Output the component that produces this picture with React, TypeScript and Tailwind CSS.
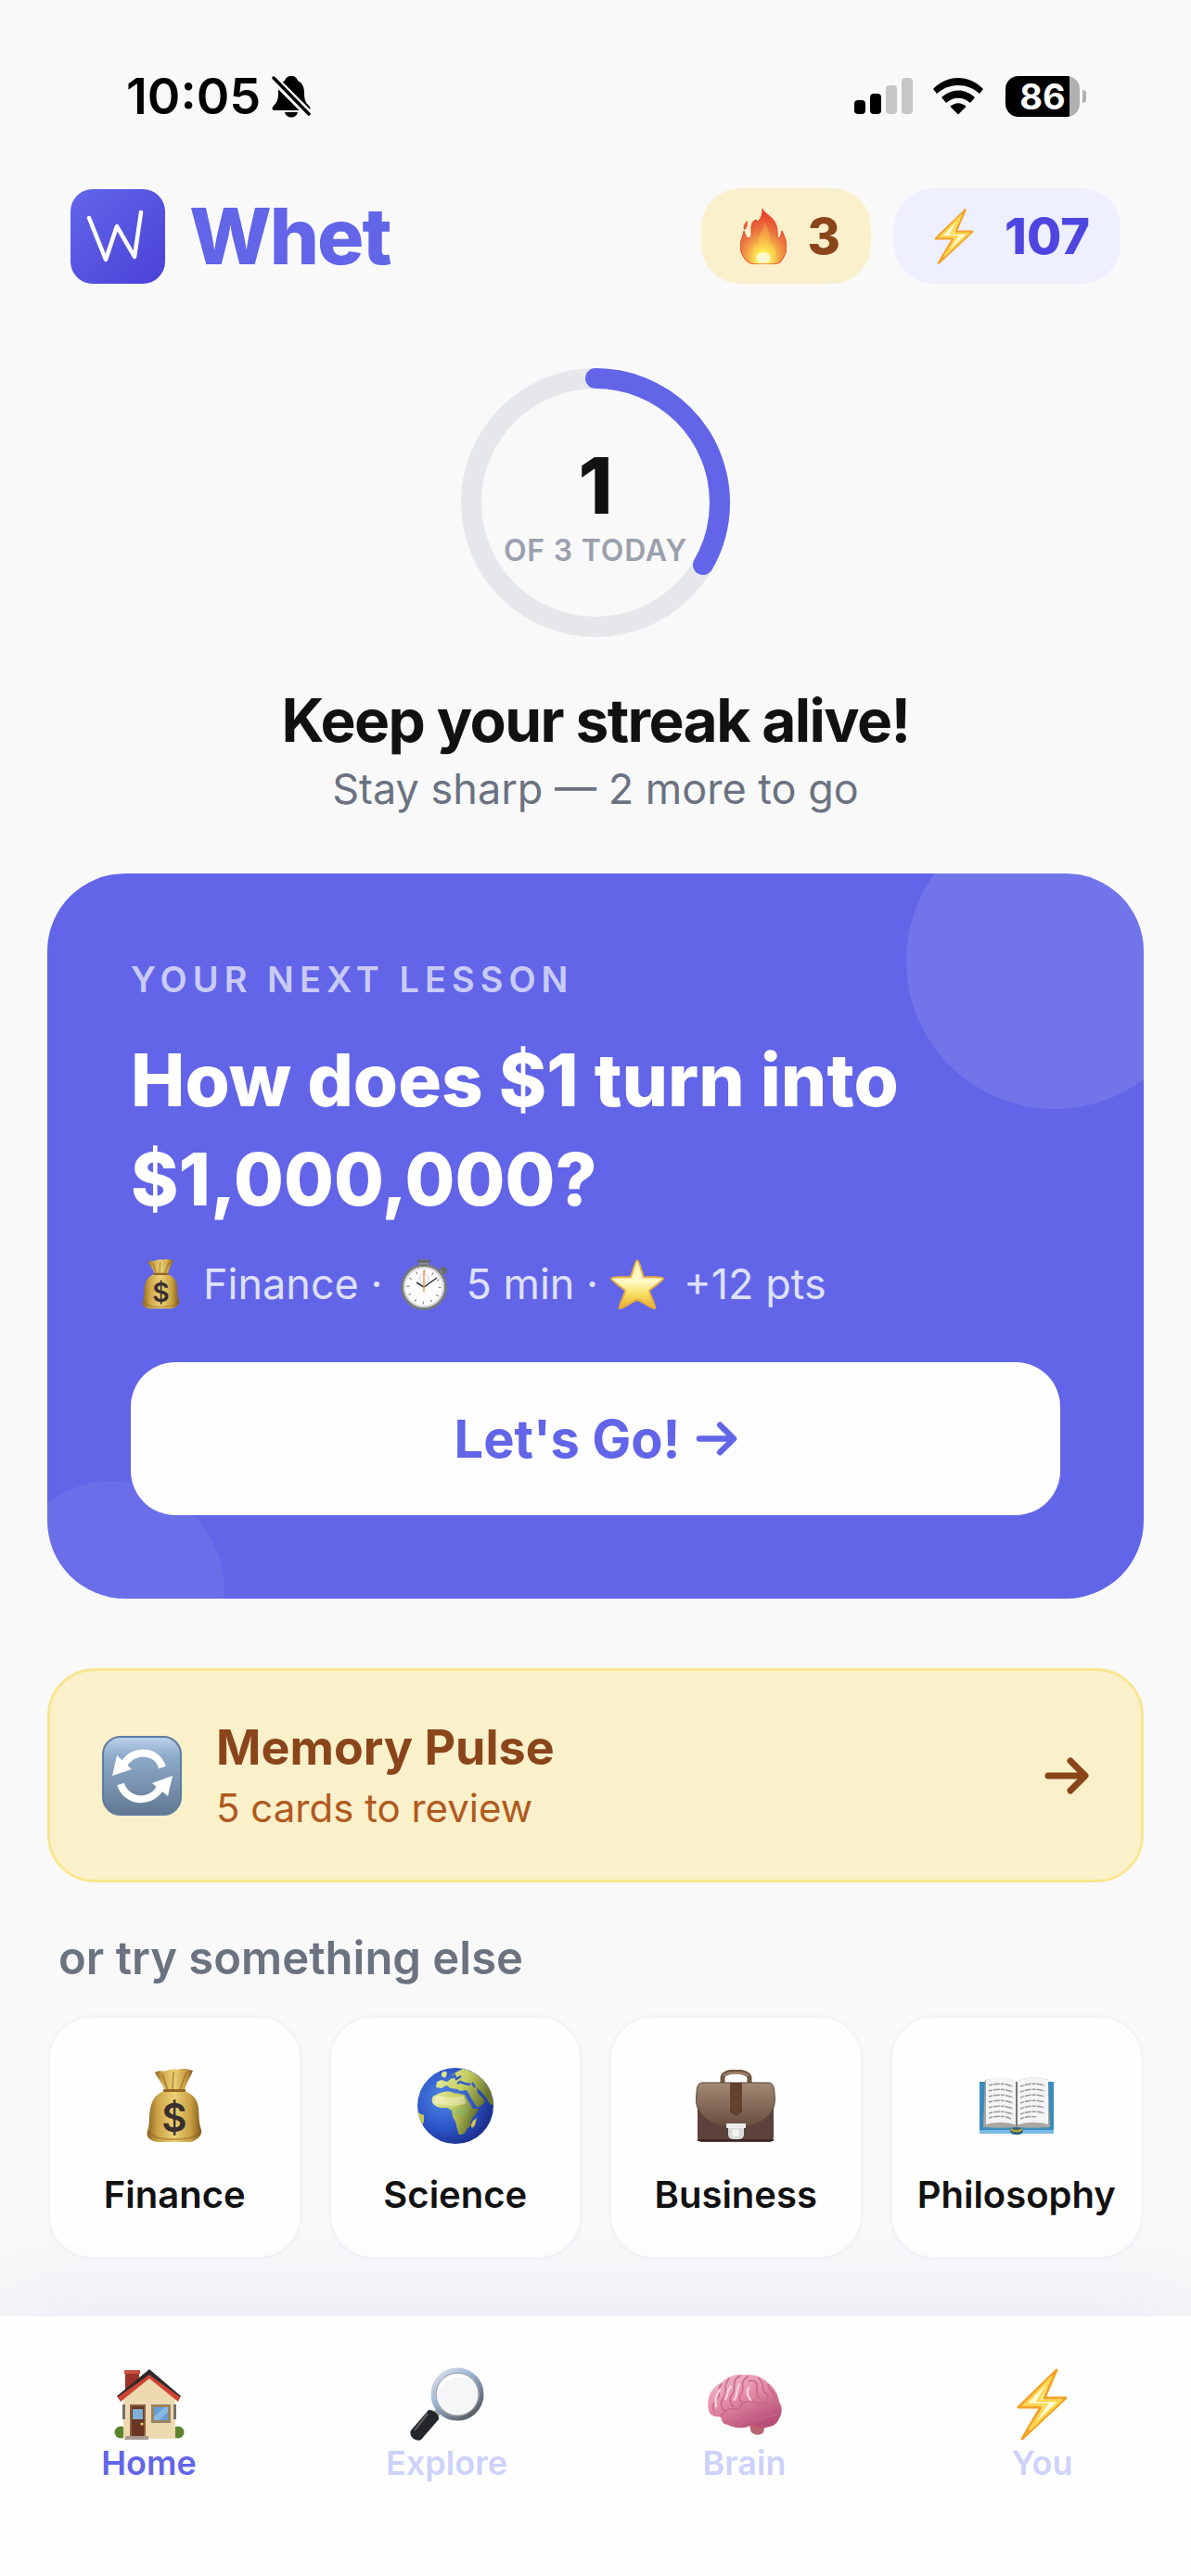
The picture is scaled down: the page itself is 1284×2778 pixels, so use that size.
import clsx from "clsx";
import type { ReactNode } from "react";

type IconProps = { className?: string };

const topics = [
  { label: "Finance", icon: <MoneyBag className="h-20 w-[60px]" /> },
  { label: "Science", icon: <Globe className="size-[84px]" /> },
  { label: "Business", icon: <Briefcase className="h-[78px] w-[86px]" /> },
  { label: "Philosophy", icon: <Book className="h-[62px] w-20" /> },
];

const tabs = [
  { label: "Home", icon: <House className="size-[76px]" />, active: true },
  { label: "Explore", icon: <Magnifier className="size-20" /> },
  { label: "Brain", icon: <Brain className="h-[66px] w-20" /> },
  { label: "You", icon: <Bolt className="h-20 w-14" /> },
];

export default function App() {
  return (
    <div className="flex min-h-screen flex-col bg-[#f9f9fa] font-['Inter','Liberation_Sans',sans-serif] text-[#111111]">
      <StatusBar />
      <Header />
      <main className="flex flex-1 flex-col px-[51px] pb-[61px]">
        <DailyProgress done={1} goal={3} />
        <NextLesson />
        <MemoryPulse />
        <h2 className="mt-[50px] px-3 text-[49px] leading-16 font-semibold text-[#6b7280]">
          or try something else
        </h2>
        <div className="mt-[29px] grid grid-cols-4 gap-7">
          {topics.map((topic) => (
            <button
              key={topic.label}
              type="button"
              className="flex flex-col items-center gap-[30px] rounded-[48px] border-3 border-[#f3f4f6] bg-[#fefefe] pt-[53px] pb-[43px]"
            >
              <span className="flex h-[84px] items-center">{topic.icon}</span>
              <span className="text-[40px] leading-12 font-semibold">{topic.label}</span>
            </button>
          ))}
        </div>
      </main>
      <TabBar />
    </div>
  );
}

function StatusBar() {
  return (
    <div className="flex h-32 items-end justify-between pr-[113px] pl-[136px] text-black">
      <div className="flex h-12 items-center gap-3">
        <span className="text-[54px] leading-12 font-semibold">10:05</span>
        <svg viewBox="0 0 42 46" className="h-[46px] w-[42px]" aria-label="Silent mode">
          <path
            d="M21 1c-4 0-6 2-7 5C8 9 7 14 7 20c0 7-2 10-5 13-3 4-1 5 2 5h34c3 0 5-2 2-5-3-3-5-6-5-13 0-6-1-11-7-14-1-3-3-5-7-5Z"
          />
          <path d="M14 40h14c-1 4-4 5.500-7 5.500S15 44 14 40Z" />
          <path d="M1 3 41 43" stroke="#f9f9fa" strokeWidth="9" />
          <path d="M2 3 40 42" stroke="currentColor" strokeWidth="3.500" strokeLinecap="round" />
        </svg>
      </div>
      <div className="flex h-12 items-center">
        <svg viewBox="0 0 63 40" className="h-10 w-[63px]" aria-label="Signal">
          <rect x="0" y="24" width="12" height="15" rx="4" />
          <rect x="17" y="17" width="12" height="22" rx="4" />
          <rect x="34" y="8" width="12" height="31" rx="4" fill="#c6c6c6" />
          <rect x="51" y="0" width="12" height="39" rx="4" fill="#c6c6c6" />
        </svg>
        <svg viewBox="0 0 54 40" className="ml-[22px] h-10 w-[54px]" aria-label="Wi-Fi">
          <path d="M0 12C15-4 39-4 54 12l-4 5C37 5 17 5 4 17Z" />
          <path d="M9 21c11-10 25-10 36 0l-5 6c-8-7-18-7-26 0Z" />
          <path d="M18.500 31c5-5 12-5 17 0L27 39.500Z" />
        </svg>
        <div className="ml-6 flex items-center gap-[3px]">
          <div className="flex h-11 w-20 items-center justify-center rounded-[14px] bg-linear-to-r from-black from-86% to-[#b0b0b0] to-86%">
            <span className="text-[38px] leading-11 font-bold text-white">86</span>
          </div>
          <div className="h-3.5 w-1 rounded-r-full bg-[#b0b0b0]" />
        </div>
      </div>
    </div>
  );
}

function Header() {
  return (
    <header className="mt-[75px] flex h-[103px] items-center justify-between px-[76px]">
      <div className="flex items-center gap-[26px]">
        <div className="flex size-[102px] items-center justify-center rounded-[24px] bg-linear-to-br from-[#6366ea] to-[#4b40d8]">
          <svg viewBox="0 0 102 102" className="size-full" fill="none" aria-hidden="true">
            <path
              d="M20 31 38 76 50 40 69 73 76 25"
              stroke="white"
              strokeWidth="4.500"
              strokeLinecap="round"
              strokeLinejoin="round"
            />
          </svg>
        </div>
        <h1 className="text-[84px] leading-none font-extrabold tracking-tight text-[#6265e8]">Whet</h1>
      </div>
      <div className="flex gap-[25px]">
        <Stat className="w-[183px] bg-[#faf0cb] text-[#8a451b]" value={3}>
          <Fire className="h-[60px] w-[50px]" />
        </Stat>
        <Stat className="w-[244px] bg-[#eeefff] text-[#4f46e0]" value={107}>
          <Bolt className="h-[62px] w-[46px]" />
        </Stat>
      </div>
    </header>
  );
}

function Stat({ className, value, children }: { className: string; value: number; children: ReactNode }) {
  return (
    <div className={clsx("flex h-[103px] items-center justify-between rounded-[42px] pr-[33px] pl-[42px]", className)}>
      {children}
      <span className="text-[54px] leading-none font-extrabold">{value}</span>
    </div>
  );
}

function DailyProgress({ done, goal }: { done: number; goal: number }) {
  const circumference = 2 * Math.PI * 134;
  return (
    <section className="mt-[91px] flex flex-col items-center text-center">
      <div className="grid size-[290px] place-items-center *:col-start-1 *:row-start-1">
        <svg viewBox="0 0 290 290" className="size-full -rotate-90" fill="none" strokeWidth="22" aria-hidden="true">
          <circle cx="145" cy="145" r="134" stroke="#e5e7ea" />
          <circle
            cx="145"
            cy="145"
            r="134"
            stroke="#6265e8"
            strokeLinecap="round"
            strokeDasharray={`${(circumference * done) / goal} ${circumference}`}
          />
        </svg>
        <div className="flex flex-col items-center pt-2">
          <span className="text-[84px] leading-24 font-extrabold">{done}</span>
          <span className="text-[32px] leading-11 font-semibold tracking-wide text-[#9ca0ad]">OF {goal} TODAY</span>
        </div>
      </div>
      <h2 className="mt-[50px] text-[64px] leading-20 font-bold tracking-tight">Keep your streak alive!</h2>
      <p className="text-[45px] leading-[68px] text-[#6b7280]">Stay sharp — {goal - done} more to go</p>
    </section>
  );
}

function NextLesson() {
  return (
    <section className="relative mt-[57px] overflow-hidden rounded-[84px] bg-[#6265e8] p-[90px] text-white">
      <div className="absolute -top-[66px] -right-16 size-80 rounded-full bg-white/10" />
      <div className="absolute -bottom-[113px] -left-[49px] size-60 rounded-full bg-white/6" />
      <div className="relative flex flex-col">
        <p className="text-[38px] leading-12 font-semibold tracking-[6px] text-[#c9cbf5]">YOUR NEXT LESSON</p>
        <h2 className="mt-[31px] max-w-[900px] text-[78px] leading-[107px] font-extrabold">
          How does $1 turn into $1,000,000?
        </h2>
        <p className="mt-[30px] flex h-[60px] items-center text-[45px] text-[#dfe0fa]">
          <MoneyBag className="mr-[25px] ml-3 h-[54px] w-[41px]" />
          Finance ·
          <Stopwatch className="mx-5 h-14 w-[50px]" />
          5 min ·
          <Star className="mr-5 ml-3 h-14 w-[60px]" />
          +12 pts
        </p>
        <button
          type="button"
          className="mt-[54px] flex h-[165px] items-center justify-center gap-4 rounded-[48px] bg-[#fefefe] text-[56px] font-bold text-[#6265e8]"
        >
          Let&apos;s Go!
          <Arrow className="h-[37px] w-[45px]" />
        </button>
      </div>
    </section>
  );
}

function MemoryPulse() {
  return (
    <button
      type="button"
      className="mt-[75px] flex h-[231px] items-center rounded-[51px] border-3 border-[#f9e690] bg-[#faf0ca] px-14 text-left text-[#8a451b]"
    >
      <Refresh className="size-[86px]" />
      <span className="ml-[37px] flex flex-1 flex-col">
        <span className="text-[52px] leading-[70px] font-bold">Memory Pulse</span>
        <span className="text-[42px] leading-[60px] text-[#b05a20]">5 cards to review</span>
      </span>
      <Arrow className="h-10 w-12" />
    </button>
  );
}

function TabBar() {
  return (
    <nav className="grid h-[280px] grid-cols-4 bg-[#fefefe] pt-[55px] shadow-[0_-12px_90px_rgba(90,90,190,0.10)]">
      {tabs.map((tab) => (
        <a
          key={tab.label}
          href={`#${tab.label.toLowerCase()}`}
          className={clsx("flex flex-col items-center", tab.active ? "text-[#6265e8]" : "text-[#ccd2fa]")}
        >
          <span className="flex h-20 items-center">{tab.icon}</span>
          <span className="text-[36px] leading-[46px] font-semibold">{tab.label}</span>
        </a>
      ))}
    </nav>
  );
}

/* Icons */

function Arrow({ className }: IconProps) {
  return (
    <svg viewBox="0 0 48 40" className={className} fill="none" stroke="currentColor" aria-hidden="true">
      <path d="M4 20h39M28 4l16 16-16 16" strokeWidth="7" strokeLinecap="round" strokeLinejoin="round" />
    </svg>
  );
}

function Fire({ className }: IconProps) {
  return (
    <svg viewBox="0 0 50 60" className={className} aria-hidden="true">
      <defs>
        <radialGradient id="fire" cx="0.500" cy="0.900" r="0.800">
          <stop offset="0" stopColor="#fffbd0" />
          <stop offset="0.180" stopColor="#fdee5a" />
          <stop offset="0.400" stopColor="#f5ad48" />
          <stop offset="0.650" stopColor="#ec7440" />
          <stop offset="1" stopColor="#e5422a" />
        </radialGradient>
      </defs>
      <path
        d="M24 0c1 6 17 9 16 27 0 3 0 5 1 5 3-1 3-4 4-8 4 8 5 13 5 19-1 7-4 11-7 15-4 2-9 2-14 2H18C12 60 7 58 5 54 1 49 0 44 0 38c1-5 3-8 4-14 1 3 2 6 4 8 5 0 4-4 4-9 0-6 1-10 5-11 2 2 1 2 3 1 3-3 4-8 4-13Z"
        fill="url(#fire)"
        stroke="#e5452b"
        strokeWidth="1"
      />
      <path d="M8 13c-4 3-5 6-4 10 4-2 4-5 4-10Z" fill="#ea5a3a" />
      <path d="M26 14c1 8-6 12-6 20 0 6-4 8-7 5 2 6-1 11 2 15 4 5 17 5 21 0 3-4 0-9 3-14-4 2-7-1-7-7 0-8-3-12-6-19Z" fill="#ffd84a" opacity="0.350" />
      <ellipse cx="25" cy="53" rx="8" ry="6" fill="#fffde0" opacity="0.800" />
    </svg>
  );
}

function Bolt({ className }: IconProps) {
  return (
    <svg viewBox="0 0 56 80" className={className} aria-hidden="true">
      <path
        d="M43 3 2 43h24L6 77l47-44H30Z"
        fill="#fff4a0"
        stroke="#f3a229"
        strokeWidth="3"
        strokeLinejoin="round"
      />
      <path d="M38 10 9 40h23L14 67l33-31H23Z" fill="#fffbd5" stroke="#fbd64c" strokeWidth="2.500" />
    </svg>
  );
}

function MoneyBag({ className }: IconProps) {
  return (
    <svg viewBox="0 0 60 80" className={className} aria-hidden="true">
      <defs>
        <linearGradient id="bag">
          <stop offset="0" stopColor="#8c6523" />
          <stop offset="0.200" stopColor="#cda548" />
          <stop offset="0.500" stopColor="#ecd276" />
          <stop offset="0.800" stopColor="#c99f41" />
          <stop offset="1" stopColor="#82591d" />
        </linearGradient>
      </defs>
      <path d="M9 4c5-4 9 0 13-2 5-2 8-2 11-1 6-2 10-1 17 1-3 8-8 14-9 22H20C18 16 12 11 9 4Z" fill="url(#bag)" />
      <path d="m17 6 6 17M29 3l-1 19M43 4l-7 18" stroke="#8f672b" strokeWidth="1.500" opacity="0.700" />
      <path d="M19 24h22c8 3 14 8 15 19 1 10 0 14 3 23 1 5-3 11-12 13H13C3 78-1 73 1 67c3-9 1-15 3-24 2-11 7-16 15-19Z" fill="url(#bag)" />
      <path d="M2 68c8 8 16 8 28 8s22-1 28-8" fill="none" stroke="#8b6222" strokeWidth="2" opacity="0.500" />
      <rect x="18" y="22" width="24" height="3" rx="1" fill="#936425" />
      <text x="30" y="68" fill="#3a2f2f" fontSize="42" fontWeight="600" textAnchor="middle">
        $
      </text>
    </svg>
  );
}

function Stopwatch({ className }: IconProps) {
  return (
    <svg viewBox="0 0 50 56" className={className} aria-hidden="true">
      <path d="M20 1h10v7H20Z" fill="#8b8f92" />
      <path d="M18 3h14" stroke="#5f6669" strokeWidth="3" />
      <circle cx="46" cy="13" r="4" fill="#646a6d" />
      <path d="m40 17 5-4" stroke="#777c80" strokeWidth="4" />
      <circle cx="25" cy="31" r="23.500" fill="#fdfdfd" stroke="#777b7f" strokeWidth="3" />
      <circle cx="25" cy="31" r="21" fill="none" stroke="#d5d5d5" strokeWidth="2" />
      <circle cx="25" cy="31" r="17" fill="none" stroke="#777" strokeWidth="3" strokeDasharray="1 7.900" />
      <circle cx="25" cy="22" r="5" fill="none" stroke="#d0cccc" />
      <path d="m17 26 8 5 14-10" fill="none" stroke="#333" strokeWidth="1.500" />
      <path d="M25 13v23" stroke="#e89758" strokeWidth="1.500" />
    </svg>
  );
}

function Star({ className }: IconProps) {
  return (
    <svg viewBox="0 0 60 56" className={className} aria-hidden="true">
      <defs>
        <linearGradient id="star" x2="0" y2="1">
          <stop offset="0" stopColor="#fff3b0" />
          <stop offset="0.450" stopColor="#fff8c5" />
          <stop offset="0.700" stopColor="#f8df62" />
          <stop offset="1" stopColor="#e6a72f" />
        </linearGradient>
      </defs>
      <path
        d="M30 2c2 0 6 17 7 18 2 1 21-1 21 2 0 2-14 11-15 13 0 3 8 18 6 19-2 2-15-9-19-9s-17 11-19 9c-2-1 6-16 6-19-1-2-15-11-15-13 0-3 19-1 21-2 1-1 5-18 7-18Z"
        fill="url(#star)"
        stroke="#e5ad3d"
        strokeWidth="2"
      />
    </svg>
  );
}

function Refresh({ className }: IconProps) {
  return (
    <svg viewBox="0 0 86 86" className={className} aria-hidden="true">
      <defs>
        <linearGradient id="refresh" x2="0" y2="1">
          <stop offset="0" stopColor="#bdd2ec" />
          <stop offset="0.250" stopColor="#8eabcb" />
          <stop offset="1" stopColor="#627892" />
        </linearGradient>
      </defs>
      <rect x="1" y="1" width="84" height="84" rx="19" fill="url(#refresh)" stroke="#607d9f" strokeWidth="2" />
      <path d="M21 38c4-23 37-27 44-4M65 49c-4 23-37 27-45 3" fill="none" stroke="white" strokeWidth="8" />
      <path d="m16 21-5 22 21-7ZM76 43 54 51l17 14Z" fill="white" />
    </svg>
  );
}

function Globe({ className }: IconProps) {
  return (
    <svg viewBox="0 0 84 84" className={className} aria-hidden="true">
      <defs>
        <radialGradient id="ocean" cx="0.350" cy="0.400" r="0.650">
          <stop offset="0" stopColor="#4f87e2" />
          <stop offset="0.600" stopColor="#2d55ca" />
          <stop offset="1" stopColor="#1c2f8c" />
        </radialGradient>
        <linearGradient id="land" x2="1" y2="0.300">
          <stop offset="0" stopColor="#e9eda0" />
          <stop offset="0.550" stopColor="#c5cd62" />
          <stop offset="1" stopColor="#67742d" />
        </linearGradient>
        <clipPath id="sphere">
          <circle cx="42" cy="42" r="41" />
        </clipPath>
      </defs>
      <g clipPath="url(#sphere)">
        <rect width="84" height="84" fill="url(#ocean)" />
        <path d="M27 7c2-3 5-3 6 0l-2 5-4-2Zm6 9 4-3 2-5 5-3 6-3c14 3 26 13 33 28l1 12-5-2-4-7-6-7-4-3 1 5 5 5 3 4c-2 4-6 5-8 7-4-5-7-10-9-14l-3-5-7 1-3-2-7-1-5-3-5 3-6-1 1-6 5-2Z" fill="url(#land)" />
        <path d="m38 12 3-3 2 4 5-3M44 18l3-2 5 2 6 1M60 17l3 5" stroke="#345ec4" strokeWidth="2.500" fill="none" />
        <path d="M26 28c6-2 10-2 14 0l7 1 5 1 4 7 5 8h6c-1 5-7 9-8 13l-1 6-4 3c-1 5-4 6-8 6-2-5-3-9-4-14l-3-6-1-6-5-3c-6 1-11 0-15-4-2-4-2-7 1-9 3-1 4-2 7-3Z" fill="url(#land)" />
        <path d="M20 35c11 3 24 3 32 0" stroke="#fcfbdc" strokeWidth="9" opacity="0.450" fill="none" />
        <path d="M39 49c6-2 11-2 16 1" stroke="#78b86f" strokeWidth="8" opacity="0.350" fill="none" />
        <path d="m61 58 4-3-2 8-3 3c-2-2-1-5 1-8ZM0 45l3 5 5 2v7l-3 6-5-8Z" fill="#c9c75a" />
      </g>
    </svg>
  );
}

function Briefcase({ className }: IconProps) {
  return (
    <svg viewBox="0 0 86 78" className={className} aria-hidden="true">
      <defs>
        <linearGradient id="leather" x2="0" y2="1">
          <stop offset="0" stopColor="#a28972" />
          <stop offset="1" stopColor="#684d3f" />
        </linearGradient>
      </defs>
      <path d="M29 14V9c0-4 5-7 14-7s15 3 15 7v5" fill="none" stroke="#73553e" strokeWidth="5" />
      <path d="M30 7c3-5 24-5 27 0" fill="none" stroke="#a5876b" strokeWidth="2" />
      <path d="M2 30h82v42c0 4-2 6-5 6H7c-3 0-5-2-5-6Z" fill="#5c423a" />
      <path d="M7 14h72c4 0 6 5 6 12 1 8 0 14-3 19-7 11-20 17-39 17S11 56 4 45C0 39 0 32 1 25c0-7 2-11 6-11Z" fill="url(#leather)" stroke="#5c4337" />
      <path d="M37 14h13v32l-6 4-7-4Z" fill="#60422f" />
      <path d="M2 76h82" stroke="#3c2925" strokeWidth="2" />
      <rect x="35" y="58" width="17" height="17" rx="5" fill="#d9dbd8" />
      <rect x="33" y="58" width="21" height="5" rx="1" fill="#eeefed" />
      <circle cx="43" cy="68" r="4" fill="#f4f5f3" />
    </svg>
  );
}

function Book({ className }: IconProps) {
  return (
    <svg viewBox="0 0 80 62" className={className} aria-hidden="true">
      <path d="M0 5h80v56H48c-3 0-3 1-8 1s-5-1-8-1H0Z" fill="#398cbd" />
      <path d="M0 57h80v4H0Z" fill="#78b9e1" />
      <ellipse cx="40" cy="58" rx="7" ry="4" fill="#2d6573" />
      <path d="M34 56c3 3 9 3 12 0" stroke="#c9a72e" strokeWidth="2" fill="none" />
      <path d="M6 3 4 54c13 1 24 1 36 0 12 1 23 1 36 0L74 3c-12-4-26-3-34 2C31 0 18 0 6 3Z" fill="#aaa6a2" />
      <path d="M7 3c12-4 25-3 33 2v47c-10-4-22-4-33-1ZM74 3C61-1 48 0 40 5v47c10-4 22-4 34-1Z" fill="#f4f4f5" />
      <path
        d="M10 9c9-3 19-2 26 1M10 15c9-3 19-2 26 1M10 21c9-3 19-2 26 1M10 27c9-3 19-2 26 1M10 33c9-3 19-2 26 1M10 39c9-3 19-2 26 1M10 44c9-3 19-2 24 1M44 10c7-3 17-4 26-1M44 16c7-3 17-4 26-1M44 22c7-3 17-4 26-1M44 28c7-3 17-4 26-1M44 34c7-3 17-4 26-1M44 40c7-3 17-4 26-1M44 45c5-2 11-3 18-2"
        stroke="#96989d"
        strokeWidth="1.500"
        strokeDasharray="4 1 7 1"
        fill="none"
      />
      <path d="M40 5v48" stroke="#77777a" strokeWidth="2" />
    </svg>
  );
}

function House({ className }: IconProps) {
  return (
    <svg viewBox="0 0 76 76" className={className} aria-hidden="true">
      <circle cx="7" cy="68" r="6.500" fill="#5b832d" />
      <circle cx="69" cy="68" r="6.500" fill="#5b832d" />
      <path d="M12 2h15v23L12 34Z" fill="#9c3328" />
      <path d="M11 1h17v4H11Z" fill="#c8513e" />
      <path d="M10 31 38 5l28 26v44H10Z" fill="#ecd9b0" />
      <path d="M38 0 72 29l-3 5L38 8 7 34l-4-5Z" fill="#30292b" />
      <path d="M38 6 71 30l-2 5-31-25L7 35l-3-5Z" fill="#cf4433" />
      <path d="M17 38h17v36H17Z" fill="#8d5d40" />
      <path d="M19 40h13v33H19Z" fill="#693625" />
      <path d="M20 43h11v11H20Z" fill="#7caed8" />
      <circle cx="30" cy="59" r="1.500" fill="#f3ce63" />
      <path d="M40 38h21v20H40Z" fill="#9b8260" />
      <path d="M43 41h15v14H43Z" fill="#679fd5" />
      <path d="m43 51 12-10h3v5l-10 9h-5Z" fill="#89b9e4" />
      <path d="M13 72h24v4H11Z" fill="#a29a91" />
      <path d="M9 38h3v16H9ZM64 38h3v16h-3Z" fill="#73706a" />
    </svg>
  );
}

function Magnifier({ className }: IconProps) {
  return (
    <svg viewBox="0 0 80 80" className={className} aria-hidden="true">
      <defs>
        <linearGradient id="rim" x2="0.800" y2="1">
          <stop offset="0" stopColor="#e2e5e9" />
          <stop offset="0.400" stopColor="#a0b9dc" />
          <stop offset="1" stopColor="#55585e" />
        </linearGradient>
      </defs>
      <path d="m29 44 5 5-6 7-5-5Z" fill="#a2a4a7" />
      <path d="M20 46c5-1 12 5 11 10L12 78c-6 3-14-4-11-10Z" fill="#23272b" />
      <path d="M19 50 5 68" stroke="#63676b" strokeWidth="2" />
      <circle cx="51" cy="29" r="26" fill="#f5f6f7" stroke="url(#rim)" strokeWidth="5" />
      <circle cx="51" cy="29" r="23" fill="none" stroke="#888b91" strokeWidth="1" />
      <path d="M34 21c5-10 17-15 27-10" fill="none" stroke="white" strokeWidth="3" />
    </svg>
  );
}

function Brain({ className }: IconProps) {
  return (
    <svg viewBox="0 0 80 66" className={className} aria-hidden="true">
      <defs>
        <linearGradient id="brain" x2="0.600" y2="1">
          <stop offset="0" stopColor="#f5bfcc" />
          <stop offset="0.500" stopColor="#e48ca6" />
          <stop offset="1" stopColor="#b84f78" />
        </linearGradient>
      </defs>
      <path d="M43 49c8-2 14-2 20 1l-3 13c-3 4-10 3-13 0Z" fill="#b96472" />
      <path
        d="M1 39C-2 25 4 15 15 9 22 2 31 0 40 1c11-1 20 3 25 9 8 5 11 14 12 20 4 6 3 13 0 18-2 6-7 9-15 10-7 1-11-2-17-2-6 4-18 2-23-1-6-1-7-4-8-9-8 1-12-2-13-7Z"
        fill="url(#brain)"
      />
      <g fill="none" stroke="#c4668a" strokeWidth="1.500" strokeLinecap="round">
        <path d="M15 11c-7 7 1 10-5 16-5 6-6 10-3 14M23 5c-9 11 1 14-7 22-3 5-2 11 3 13M35 2c-12 6-2 14-10 22-2 4-1 9 3 11M43 3c-11 7-1 13-8 20-2 4 0 6 2 8" />
        <path d="M44 8c6-2 10 1 9 8-1 5 0 9 4 11M55 5c8 6 1 13 8 16 3 2 2 5 1 7M65 11c0 8 7 7 7 14 0 4 4 7 5 11" />
        <path d="M14 46c5-9 14-10 20-7 1-9 11-11 17-8 7 1 14-2 20 3M18 53c7-5 12 1 17-3s6-9 13-7c4 1 7-3 12-3 6 0 10-1 12-6M34 56c4-5 10-8 18-7 9 0 14-4 24-5" />
      </g>
      <path d="M13 17c-5 7-5 12-4 18M25 14c-5 4-3 8-6 13M34 11c-4 7-1 10-5 17M44 15c-3 7 0 9 2 13" fill="none" stroke="#f9d0da" strokeWidth="2.500" strokeLinecap="round" />
    </svg>
  );
}
